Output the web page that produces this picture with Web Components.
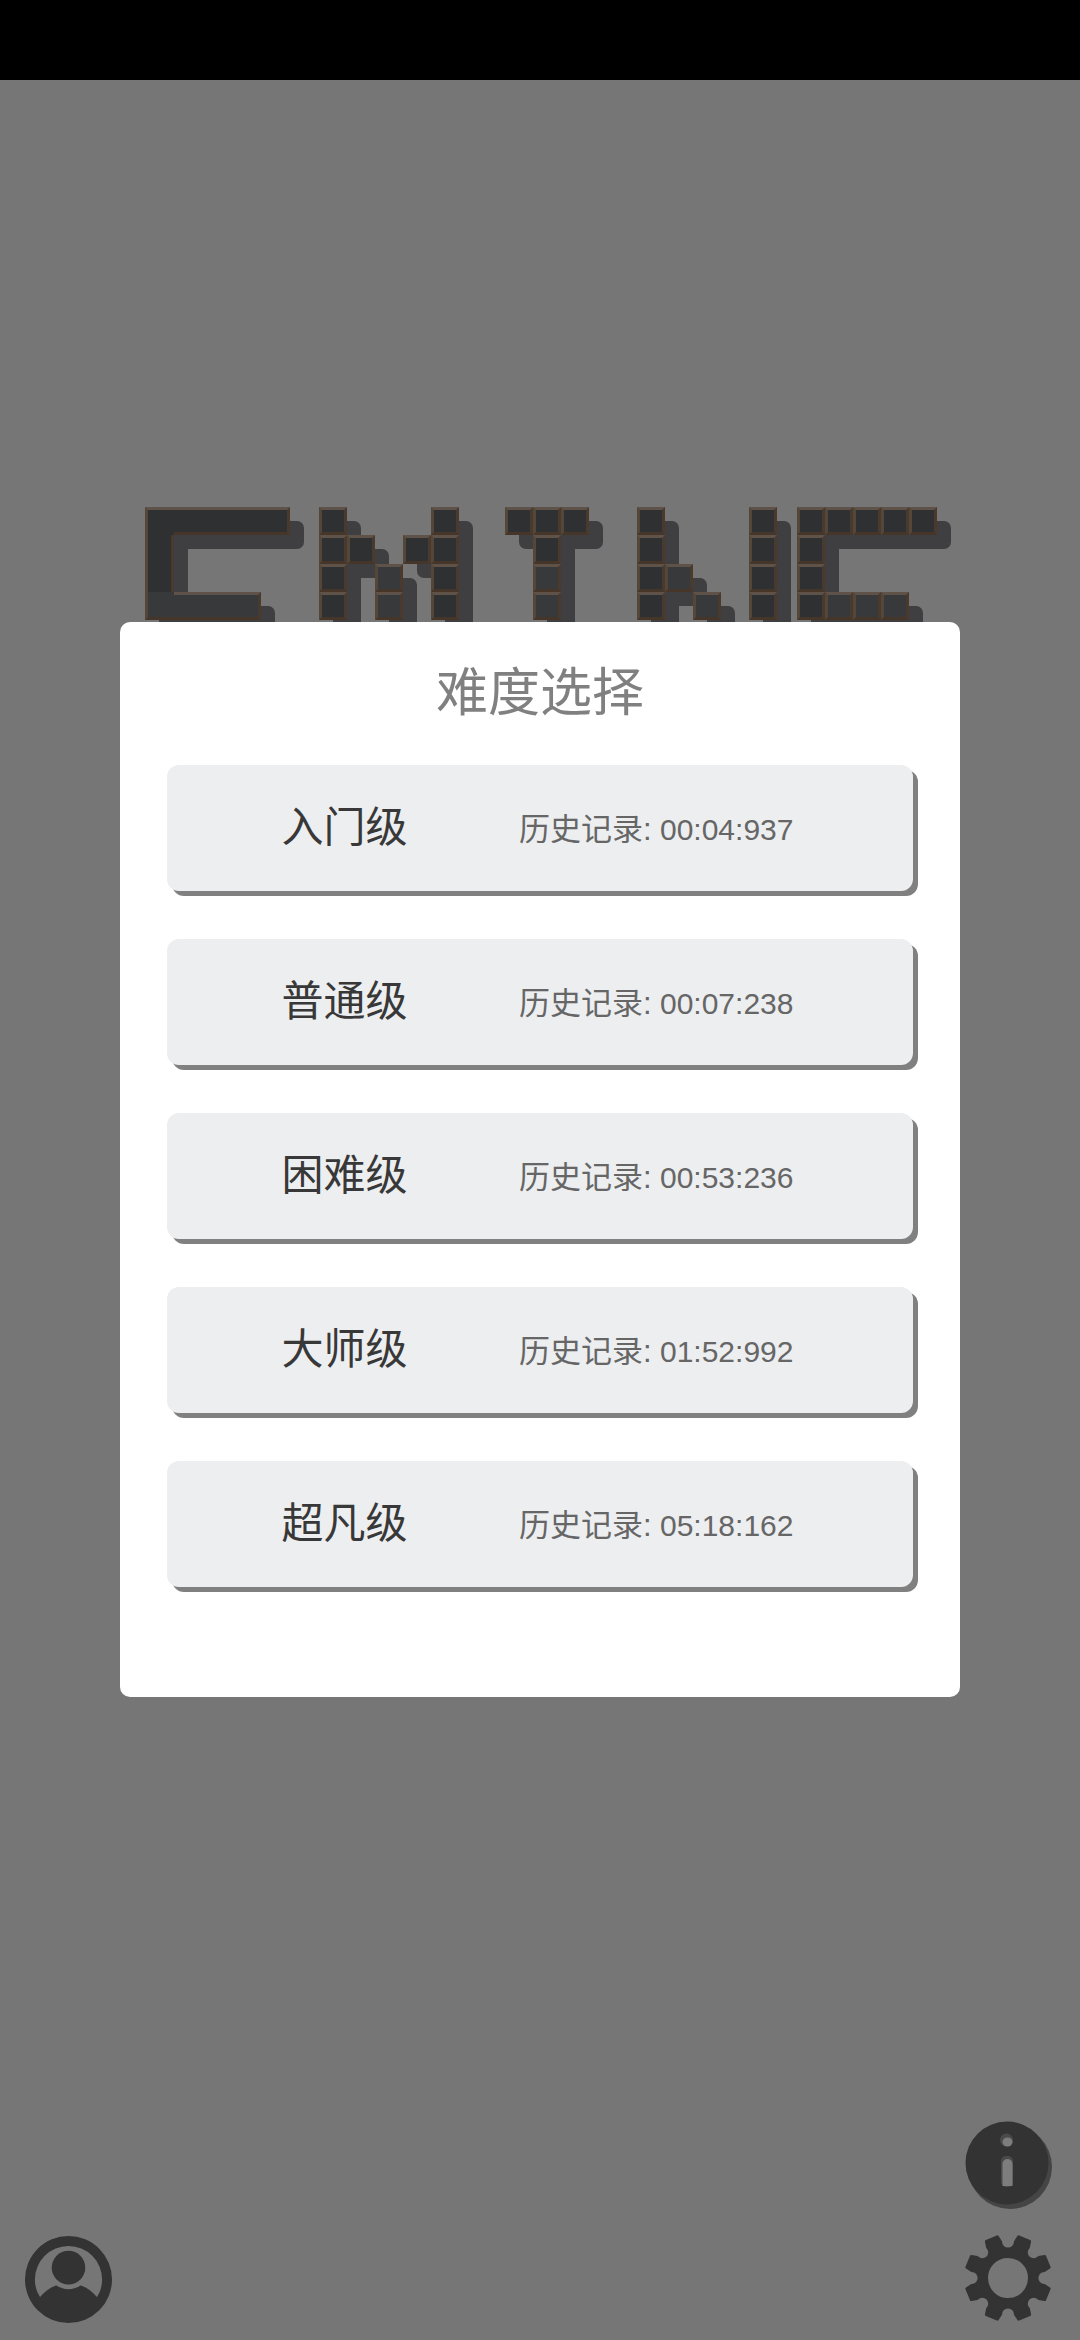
<!DOCTYPE html>
<html lang="zh">
<head>
<meta charset="utf-8">
<title>难度选择</title>
<style>
  html, body { margin: 0; padding: 0; height: 100%; background: #767676; }
</style>
</head>
<body>
<game-screen>
  <logo-letter slot="logo" cell="29" merged pattern="*****;*....;*....;++++."></logo-letter>
  <logo-letter slot="logo" gap="29" pattern="*...*;**.**;*.+.*;*.+.*"></logo-letter>
  <logo-letter slot="logo" gap="46" pattern="***;.*.;.+.;.+."></logo-letter>
  <logo-letter slot="logo" gap="48" pattern="*...*;*...*;*+..*;*.+.*"></logo-letter>
  <logo-letter slot="logo" gap="20" pattern="*****;*....;*....;*+++."></logo-letter>

  <level-dialog slot="dialog">
    <span slot="title">难度选择</span>
    <level-row><span slot="name">入门级</span><span slot="record">00:04:937</span></level-row>
    <level-row><span slot="name">普通级</span><span slot="record">00:07:238</span></level-row>
    <level-row><span slot="name">困难级</span><span slot="record">00:53:236</span></level-row>
    <level-row><span slot="name">大师级</span><span slot="record">01:52:992</span></level-row>
    <level-row><span slot="name">超凡级</span><span slot="record">05:18:162</span></level-row>
  </level-dialog>

  <icon-avatar slot="left"></icon-avatar>
  <icon-info slot="right"></icon-info>
  <icon-gear slot="right"></icon-gear>
</game-screen>

<script>
class GameScreen extends HTMLElement {
  connectedCallback() {
    this.attachShadow({ mode: 'open' });
    this.shadowRoot.innerHTML = `
      <style>
        :host {
          display: flex;
          flex-direction: column;
          width: 1080px;
          height: 2340px;
          overflow: hidden;
          background: #767676;
        }
        .status { height: 80px; flex: none; background: #000; }
        .stage {
          position: relative;
          flex: 1;
          display: flex;
          flex-direction: column;
          justify-content: space-between;
        }
        .logo { display: flex; padding: 427px 0 0 145px; }
        .dialog { position: absolute; left: 120px; top: 542px; }
        .bottom {
          display: flex;
          justify-content: space-between;
          align-items: flex-end;
          padding: 0 27px 17px 25px;
        }
        .tools { display: flex; flex-direction: column; align-items: center; gap: 22px; }
      </style>
      <div class="status"></div>
      <div class="stage">
        <div class="logo"><slot name="logo"></slot></div>
        <div class="bottom">
          <slot name="left"></slot>
          <div class="tools"><slot name="right"></slot></div>
        </div>
        <div class="dialog"><slot name="dialog"></slot></div>
      </div>
    `;
  }
}

// one block letter of the logo, pattern rows split by ";"
// * dark tile, + lighter tile, . empty
class LogoLetter extends HTMLElement {
  connectedCallback() {
    const rows = this.getAttribute('pattern').split(';');
    const cell = Number(this.getAttribute('cell') || 28);
    const merged = this.hasAttribute('merged');
    const on = (r, c) => rows[r] && rows[r][c] && rows[r][c] !== '.';
    let tiles = '';
    let shades = '';

    rows.forEach((row, r) => {
      [...row].forEach((ch, c) => {
        if (ch === '.') return;
        const place = `grid-row:${r + 1};grid-column:${c + 1};`;
        const round = [
          !on(r - 1, c) && !on(r, c - 1),
          !on(r - 1, c) && !on(r, c + 1),
          !on(r + 1, c) && !on(r, c + 1),
          !on(r + 1, c) && !on(r, c - 1)
        ].map(v => (v ? '7px' : '0')).join(' ');
        shades += `<i style="${place}border-radius:${round}"></i>`;
        let sides = '';
        if (merged) {
          if (on(r - 1, c)) sides += 'border-top-width:0;';
          if (on(r + 1, c)) sides += 'border-bottom-width:0;';
          if (on(r, c - 1)) sides += 'border-left-width:0;';
          if (on(r, c + 1)) sides += 'border-right-width:0;';
        }
        tiles += `<b class="${ch === '+' ? 'light' : ''}" style="${place}${sides}"></b>`;
      });
    });

    this.attachShadow({ mode: 'open' });
    this.shadowRoot.innerHTML = `
      <style>
        :host {
          display: block;
          position: relative;
          flex: none;
          margin-left: ${this.getAttribute('gap') || 0}px;
          --cols: ${rows[0].length};
        }
        .grid {
          display: grid;
          grid-template-columns: repeat(var(--cols), ${cell}px);
          grid-auto-rows: 28.3px;
        }
        .shade { position: absolute; left: 14px; top: 14px; }
        .shade i { background: #3f3f41; }
        .tiles { position: relative; }
        b {
          box-sizing: border-box;
          border-style: solid;
          border-width: 3px;
          border-color: #5f5248 #4a3a2e #463629 #544638;
          background: #2f3032;
        }
        b.light { background-color: #38393a; }
      </style>
      <div class="grid shade">${shades}</div>
      <div class="grid tiles">${tiles}</div>
    `;
  }
}

class LevelDialog extends HTMLElement {
  connectedCallback() {
    this.attachShadow({ mode: 'open' });
    this.shadowRoot.innerHTML = `
      <style>
        :host {
          display: block;
          box-sizing: border-box;
          width: 840px;
          height: 1075px;
          padding: 0 47px;
          background: #fff;
          border-radius: 10px;
        }
        h2 {
          margin: 0;
          height: 143px;
          text-align: center;
          font: 400 52px/143px "Liberation Sans", "Noto Sans CJK SC", sans-serif;
          color: #808080;
        }
        .list { display: flex; flex-direction: column; gap: 48px; }
      </style>
      <h2><slot name="title"></slot></h2>
      <div class="list"><slot></slot></div>
    `;
  }
}

class LevelRow extends HTMLElement {
  connectedCallback() {
    this.attachShadow({ mode: 'open' });
    this.shadowRoot.innerHTML = `
      <style>
        :host {
          display: grid;
          grid-template-columns: 352px 1fr;
          align-items: center;
          height: 126px;
          background: #edeef0;
          border-radius: 12px;
          box-shadow: 5px 5px 0 #808080;
        }
        .name {
          padding-left: 3px;
          text-align: center;
          font: 400 42px/1 "Liberation Sans", "Noto Sans CJK SC", sans-serif;
          color: #383838;
        }
        .record {
          padding-top: 2px;
          font: 400 30px/1 "Liberation Sans", "Noto Sans CJK SC", sans-serif;
          color: #666;
        }
        .label { font-size: 31px; }
      </style>
      <div class="name"><slot name="name"></slot></div>
      <div class="record"><span class="label">历史记录:</span> <slot name="record"></slot></div>
    `;
  }
}

class IconAvatar extends HTMLElement {
  connectedCallback() {
    this.attachShadow({ mode: 'open' });
    this.shadowRoot.innerHTML = `
      <style>:host { display: block; width: 87px; height: 87px; } svg { display: block; }</style>
      <svg width="87" height="87" viewBox="0 0 88 88" fill="#333">
        <path fill-rule="evenodd" d="M44 0a44 44 0 1 1 0 88a44 44 0 1 1 0-88zM44 10a34 34 0 1 0 0 68a34 34 0 1 0 0-68z"/>
        <circle cx="44" cy="32" r="17"/>
        <path d="M15 62 C20 56 27 51 32 50 C38 55 50 55 56 50 C61 51 68 56 73 62 C72 72 58 82 44 82 C30 82 16 72 15 62z"/>
      </svg>
    `;
  }
}

class IconInfo extends HTMLElement {
  connectedCallback() {
    this.attachShadow({ mode: 'open' });
    this.shadowRoot.innerHTML = `
      <style>:host { display: block; width: 90px; height: 90px; } svg { display: block; }</style>
      <svg width="90" height="90" viewBox="0 0 90 90">
        <circle cx="47" cy="46" r="42" fill="#454545"/>
        <circle cx="44" cy="42" r="41.5" fill="#333"/>
        <circle cx="43.5" cy="19" r="6.5" fill="#4a4a4a"/>
        <ellipse cx="44.5" cy="21" rx="5" ry="4.5" fill="#7d7d7d"/>
        <rect x="38" y="35" width="12" height="31" rx="5" fill="#4a4a4a"/>
        <path d="M39.5 43a5 5 0 0 1 10 0v22h-10z" fill="#7d7d7d"/>
      </svg>
    `;
  }
}

class IconGear extends HTMLElement {
  connectedCallback() {
    const pt = (r, deg) => {
      const t = (deg - 90) * Math.PI / 180;
      return `${(r * Math.cos(t)).toFixed(2)} ${(r * Math.sin(t)).toFixed(2)}`;
    };
    let d = '';
    for (let k = 0; k < 8; k++) {
      const a = 22.5 + 45 * k;
      d += `${k ? 'A7 7 0 0 0 ' : 'M'}${pt(37, a - 11)}L${pt(42.5, a - 8)}L${pt(42.5, a + 8)}L${pt(37, a + 11)}`;
    }
    d += `A7 7 0 0 0 ${pt(37, 11.5)}z`;
    this.attachShadow({ mode: 'open' });
    this.shadowRoot.innerHTML = `
      <style>:host { display: block; width: 90px; height: 90px; } svg { display: block; }</style>
      <svg width="90" height="90" viewBox="-45 -45 90 90">
        <path fill="#333" stroke="#333" stroke-width="3" stroke-linejoin="round" fill-rule="evenodd"
          d="${d}M0-21.5a21.5 21.5 0 1 0 0 43a21.5 21.5 0 1 0 0-43z"/>
      </svg>
    `;
  }
}

customElements.define('game-screen', GameScreen);
customElements.define('logo-letter', LogoLetter);
customElements.define('level-dialog', LevelDialog);
customElements.define('level-row', LevelRow);
customElements.define('icon-avatar', IconAvatar);
customElements.define('icon-info', IconInfo);
customElements.define('icon-gear', IconGear);
</script>
</body>
</html>
